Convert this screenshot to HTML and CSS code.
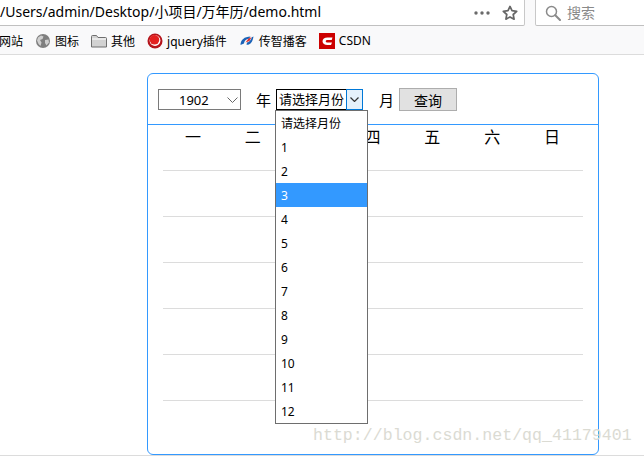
FILE: index.html
```html
<!DOCTYPE html>
<html lang="zh-CN">
<head>
<meta charset="utf-8">
<title>万年历</title>
<link rel="stylesheet" href="styles.css">
</head>
<body>
<header class="toolbar">
  <div class="urlbar">
    <span class="url">/Users/admin/Desktop/小项目/万年历/demo.html</span>
    <svg class="dots" width="16" height="4" viewBox="0 0 16 4"><circle cx="2" cy="2" r="1.7"/><circle cx="8" cy="2" r="1.7"/><circle cx="14" cy="2" r="1.7"/></svg>
    <svg class="star" width="16" height="16" viewBox="0 0 16 16"><path d="M8 1.4l2 4.3 4.7.6-3.5 3.2.9 4.7L8 11.9l-4.1 2.3.9-4.7L1.300 6.300l4.700-.6z" fill="none" stroke="#666" stroke-width="1.700" stroke-linejoin="round"/></svg>
  </div>
  <div class="searchbar">
    <svg width="16" height="16" viewBox="0 0 16 16"><circle cx="6.500" cy="6.500" r="5" fill="none" stroke="#8a8a8a" stroke-width="1.500"/><path d="M10.300 10.300L15 15" stroke="#8a8a8a" stroke-width="2" stroke-linecap="round"/></svg>
    <span>搜索</span>
  </div>
</header>
<nav class="bookmarks">
  <span class="mark">网站</span>
  <span class="mark">
    <svg width="16" height="16" viewBox="0 0 16 16"><circle cx="8" cy="8" r="7" fill="#7f7f7f"/><path d="M3 4.500l3-2 2.500 1-1 2.500-2.500 1 1.500 2.500-1 3.500-2-2-1.500-3.500zM10 7l3.500-.5.500 3-2.500 3-1.500-2.500z" fill="#cfcfcf"/></svg>
    图标
  </span>
  <span class="mark">
    <svg width="16" height="16" viewBox="0 0 16 16"><path d="M.5 14V3.500a1 1 0 0 1 1-1h4l1.500 2h7.500a1 1 0 0 1 1 1V14z" fill="#d2d2d2" stroke="#6f6f6f"/><path d="M1 6h14" stroke="#fff"/></svg>
    其他
  </span>
  <span class="mark">
    <svg width="16" height="16" viewBox="0 0 16 16"><circle cx="8" cy="8" r="7.500" fill="#b5141b"/><circle cx="8" cy="7.500" r="5.400" fill="#fff"/><circle cx="7.500" cy="6.800" r="4.800" fill="#e3201f"/></svg>
    jquery插件
  </span>
  <span class="mark">
    <svg width="16" height="16" viewBox="0 0 16 16"><path d="M1.500 12C1.500 7 5.500 3.500 11.500 3.500L10 5.800C7 6 5.200 8 5 10.500z" fill="#1c63b7"/><path d="M7.500 11.800c3.500.3 6-2.300 7-8.300l-1.700.8c-.8 3-2.500 4.800-4.800 5.200z" fill="#1c63b7"/><path d="M6.500 9.500l3-4 3-1.300-2 3.800z" fill="#e0322d"/></svg>
    传智播客
  </span>
  <span class="mark">
    <svg width="16" height="16" viewBox="0 0 16 16"><rect width="16" height="16" fill="#cc0000"/><path d="M13.500 4.500H8.500C5.500 4.500 3.500 6 3.500 8.300s2 3.700 5 3.700h3.500l1-2.500H9c-1.500 0-2.300-.5-2.300-1.300S7.500 7 9 7h3.700z" fill="#fff"/></svg>
    CSDN
  </span>
</nav>
<main class="page">
  <section class="calendar">
    <div class="controls">
      <div class="select year"><span>1902</span><svg class="chev" width="11" height="6" viewBox="0 0 11 6"><path d="M.5.500l5 5 5-5" fill="none" stroke="#666"/></svg></div>
      <span class="label">年</span>
      <div class="month">
        <div class="month-value">请选择月份</div>
        <div class="month-btn"><svg width="9" height="5" viewBox="0 0 9 5"><path d="M.5.500l4 4 4-4" fill="none" stroke="#333" stroke-width="1.200"/></svg></div>
        <ul class="dropdown">
          <li>请选择月份</li><li>1</li><li>2</li><li class="active">3</li><li>4</li><li>5</li><li>6</li><li>7</li><li>8</li><li>9</li><li>10</li><li>11</li><li>12</li>
        </ul>
      </div>
      <span class="label label-wide">月</span>
      <button class="query" type="button">查询</button>
    </div>
    <div class="grid">
      <div class="week"><span>一</span><span>二</span><span>三</span><span>四</span><span>五</span><span>六</span><span>日</span></div>
      <div class="row"></div><div class="row"></div><div class="row"></div><div class="row"></div><div class="row"></div>
    </div>
  </section>
  <div class="watermark">http://blog.csdn.net/qq_41179401</div>
</main>
</body>
</html>
```
FILE: styles.css
```css
* { box-sizing: border-box; }
html, body { margin: 0; height: 100%; }
body {
  width: 644px;
  height: 456px;
  overflow: hidden;
  background: #fff;
  color: #000;
  font-family: "Noto Sans", "Noto Sans CJK SC", sans-serif;
}
svg { display: block; flex: none; }

.toolbar {
  height: 26px;
  display: flex;
  gap: 10px;
  background: #f9f9fa;
}
.urlbar {
  flex: 0 0 525px;
  display: flex;
  align-items: center;
  background: #fff;
  border-right: 1px solid #c8c8c8;
  border-bottom: 1px solid #c0c0c0;
  border-bottom-right-radius: 2px;
}
.url {
  flex: 1;
  padding-bottom: 2px;
  font-size: 14px;
  line-height: 22px;
  white-space: nowrap;
}
.dots { fill: #6a6a6a; margin-right: 12px; }
.star { margin-right: 6px; }
.searchbar {
  flex: 1;
  display: flex;
  align-items: center;
  gap: 6px;
  padding-left: 9px;
  background: #fff;
  border-left: 1px solid #c8c8c8;
  border-bottom: 1px solid #c0c0c0;
  border-bottom-left-radius: 2px;
  font-size: 14px;
  color: #8a8a8a;
}
.searchbar span { padding-bottom: 2px; }

.bookmarks {
  height: 29px;
  display: flex;
  align-items: center;
  gap: 12px;
  padding-top: 1px;
  margin-left: -1px;
  background: #f9f9fa;
  border-bottom: 1px solid #dcdcdc;
  font-size: 12px;
  white-space: nowrap;
}
.mark { display: flex; align-items: center; gap: 4px; }

.page {
  position: relative;
  height: 401px;
  padding: 18px 0 0 147px;
  border-bottom: 1px solid #dcdcdc;
}
.calendar {
  width: 452px;
  height: 382px;
  border: 1px solid #3399ff;
  border-radius: 6px;
}
.controls {
  height: 51px;
  display: flex;
  align-items: center;
  padding: 1px 0 0 10px;
  border-bottom: 1px solid #3399ff;
  font-size: 15px;
}
.select {
  height: 21px;
  display: flex;
  align-items: center;
  border: 1px solid #7a7a7a;
  font-size: 13px;
}
.year {
  width: 83px;
  justify-content: space-between;
  padding: 0 1px 0 20px;
}
.chev { margin-right: 1px; }
.label { width: 35px; text-align: right; padding-right: 5px; }
.label-wide { width: 36px; }
.month {
  position: relative;
  width: 87px;
  height: 21px;
  display: flex;
}
.month-value {
  flex: 1;
  border: 1px solid #000;
  border-right: 0;
  padding-left: 2px;
  font-size: 13px;
  line-height: 19px;
  white-space: nowrap;
  overflow: hidden;
}
.month-btn {
  flex: 0 0 17px;
  display: flex;
  align-items: center;
  justify-content: center;
  background: #e5f1fb;
  border: 1px solid #0078d7;
}
.dropdown {
  position: absolute;
  top: 21px;
  left: -1px;
  width: 93px;
  margin: 0;
  padding: 0;
  list-style: none;
  background: #fff;
  border: 1px solid #6e6e6e;
  font-size: 12px;
}
.dropdown li { height: 24px; line-height: 26px; padding-left: 5px; }
.dropdown .active { background: #3399ff; color: #fff; }
.query {
  width: 58px;
  height: 23px;
  padding: 0;
  background: #e1e1e1;
  border: 1px solid #adadad;
  color: #000;
  font: 14px "Noto Sans", "Noto Sans CJK SC", sans-serif;
}
.grid { padding: 0 15px; }
.week {
  height: 46px;
  display: grid;
  grid-template-columns: repeat(7, 1fr);
  padding-right: 1px;
  border-bottom: 1px solid #dcdcdc;
  font-size: 16px;
  line-height: 24px;
  text-align: center;
}
.row { height: 46px; border-bottom: 1px solid #dcdcdc; }
.watermark {
  position: absolute;
  left: 313px;
  top: 370px;
  font-family: "Liberation Mono", monospace;
  font-size: 16.600px;
  line-height: 22px;
  white-space: nowrap;
  color: #dbdbd3;
}
```
